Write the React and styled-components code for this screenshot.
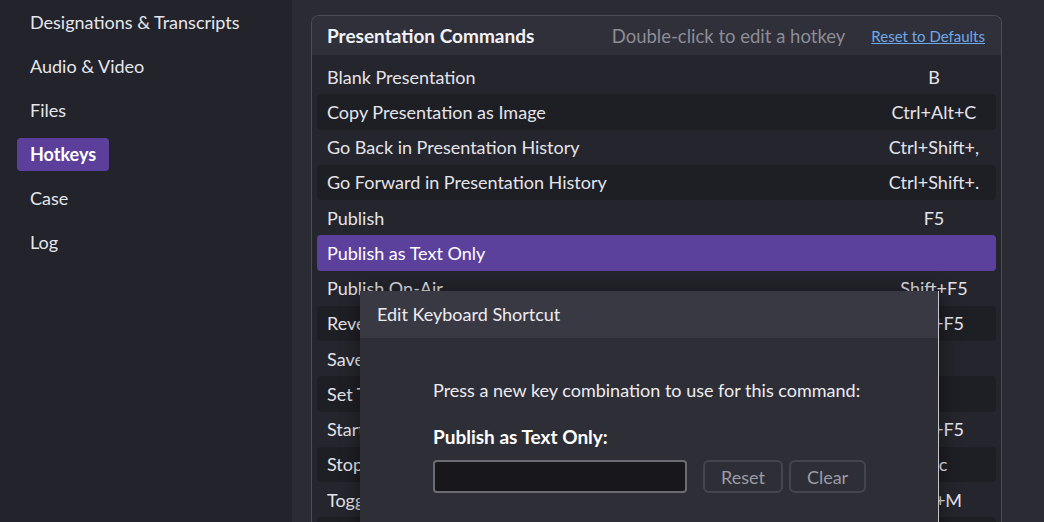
import React from "react";
import styled, { createGlobalStyle } from "styled-components";

const GlobalStyle = createGlobalStyle`
  html, body {
    margin: 0;
    padding: 0;
    background: #2b2b34;
    overflow: hidden;
  }
  body {
    font-family: Lato, "Open Sans", sans-serif;
    color: #e8e8ee;
  }
`;

const navItems = [
  "Designations & Transcripts",
  "Audio & Video",
  "Files",
  "Hotkeys",
  "Case",
  "Log",
];

const commands = [
  ["Blank Presentation", "B"],
  ["Copy Presentation as Image", "Ctrl+Alt+C"],
  ["Go Back in Presentation History", "Ctrl+Shift+,"],
  ["Go Forward in Presentation History", "Ctrl+Shift+."],
  ["Publish", "F5"],
  ["Publish as Text Only", ""],
  ["Publish On-Air", "Shift+F5"],
  ["Reveal Presentation", "Ctrl+F5"],
  ["Save Presentation", ""],
  ["Set Timer", ""],
  ["Start Timer", "Ctrl+F5"],
  ["Stop Timer", "Esc"],
  ["Toggle Mute", "Ctrl+M"],
  ["Toggle Fullscreen", "F11"],
];

const App = () => {
  return (
    <>
      <GlobalStyle />
      <Page>
        <Sidebar>
          {navItems.map((item) => (
            <NavItem key={item} active={item === "Hotkeys"}>
              {item}
            </NavItem>
          ))}
        </Sidebar>
        <Main>
          <Panel>
            <PanelHeader>
              <PanelTitle>Presentation Commands</PanelTitle>
              <Hint>Double-click to edit a hotkey</Hint>
              <ResetLink href="#">Reset to Defaults</ResetLink>
            </PanelHeader>
            <Rows>
              {commands.map(([name, key], i) => (
                <Row
                  key={name}
                  striped={i % 2 === 1}
                  selected={name === "Publish as Text Only"}
                >
                  <CommandName>{name}</CommandName>
                  <Hotkey>{key}</Hotkey>
                </Row>
              ))}
            </Rows>
          </Panel>
          <Dialog>
            <DialogHeader>Edit Keyboard Shortcut</DialogHeader>
            <DialogBody>
              <Prompt>Press a new key combination to use for this command:</Prompt>
              <CommandLabel>Publish as Text Only:</CommandLabel>
              <InputRow>
                <KeyInput />
                <GhostButton>Reset</GhostButton>
                <GhostButton>Clear</GhostButton>
              </InputRow>
            </DialogBody>
          </Dialog>
        </Main>
      </Page>
    </>
  );
};

const Page = styled.div`
  display: flex;
  width: 1044px;
  height: 522px;
  overflow: hidden;
`;

const Sidebar = styled.nav`
  width: 292px;
  flex: none;
  background: #23232b;
  padding: 6px 0 0 17px;
  box-sizing: border-box;
  display: flex;
  flex-direction: column;
  align-items: flex-start;
  gap: 11px;
`;

const NavItem = styled.div`
  height: 33px;
  line-height: 33px;
  padding: 0 13px;
  border-radius: 4px;
  font-size: 18px;
  font-weight: ${(p) => (p.active ? 700 : 400)};
  color: ${(p) => (p.active ? "#ffffff" : "#e6e6ec")};
  background: ${(p) => (p.active ? "#5b3f9b" : "transparent")};
`;

const Main = styled.main`
  position: relative;
  flex: 1;
  background: #2b2b34;
  padding: 15px 42px 0 19px;
`;

const Panel = styled.section`
  border: 1px solid #4c4c57;
  border-bottom: none;
  border-radius: 8px 8px 0 0;
  background: #25252d;
  overflow: hidden;
`;

const PanelHeader = styled.header`
  height: 39px;
  display: flex;
  align-items: center;
  padding: 0 16px 0 15px;
  background: #30303a;
`;

const PanelTitle = styled.h2`
  margin: 0;
  flex: 1;
  font-size: 19px;
  font-weight: 700;
  color: #f2f2f6;
`;

const Hint = styled.span`
  font-size: 18.5px;
  color: #8d8d96;
  margin-right: 26px;
`;

const ResetLink = styled.a`
  font-size: 15px;
  color: #6ea9ea;
  text-decoration: underline;
`;

const Rows = styled.div`
  padding: 4px 5px 0;
  display: flex;
  flex-direction: column;
`;

const Row = styled.div`
  height: 35.25px;
  display: flex;
  align-items: center;
  padding: 0 0 0 10px;
  border-radius: 4px;
  font-size: 18px;
  color: ${(p) => (p.selected ? "#ffffff" : "#e4e4ea")};
  background: ${(p) =>
    p.selected ? "#5c419c" : p.striped ? "#1e1e25" : "transparent"};
`;

const CommandName = styled.span`
  flex: 1;
`;

const Hotkey = styled.span`
  width: 124px;
  text-align: center;
`;

const Dialog = styled.div`
  position: absolute;
  left: 68px;
  top: 291px;
  width: 578px;
  height: 260px;
  background: #2e2e37;
  border-right: 1px solid #c4c4cc;
  box-shadow: 0 0 18px rgba(0, 0, 0, 0.45);
`;

const DialogHeader = styled.div`
  height: 47px;
  line-height: 47px;
  padding-left: 17px;
  background: #393943;
  font-size: 18px;
  color: #ececf2;
`;

const DialogBody = styled.div`
  padding: 41px 0 0 73px;
`;

const Prompt = styled.p`
  margin: 0 0 24px;
  font-size: 18px;
  color: #ececf2;
`;

const CommandLabel = styled.div`
  font-size: 19px;
  font-weight: 700;
  color: #ffffff;
  margin-bottom: 12px;
`;

const InputRow = styled.div`
  display: flex;
  gap: 6px;
`;

const KeyInput = styled.div`
  width: 250px;
  height: 29px;
  border: 2px solid #6b6b74;
  border-radius: 4px;
  background: #17171c;
  margin-right: 10px;
`;

const GhostButton = styled.button`
  height: 33px;
  padding: 0 16px;
  border: 2px solid #45454f;
  border-radius: 6px;
  background: #2e2e37;
  color: #9c9ca5;
  font-family: inherit;
  font-size: 18px;
`;

export default App;
